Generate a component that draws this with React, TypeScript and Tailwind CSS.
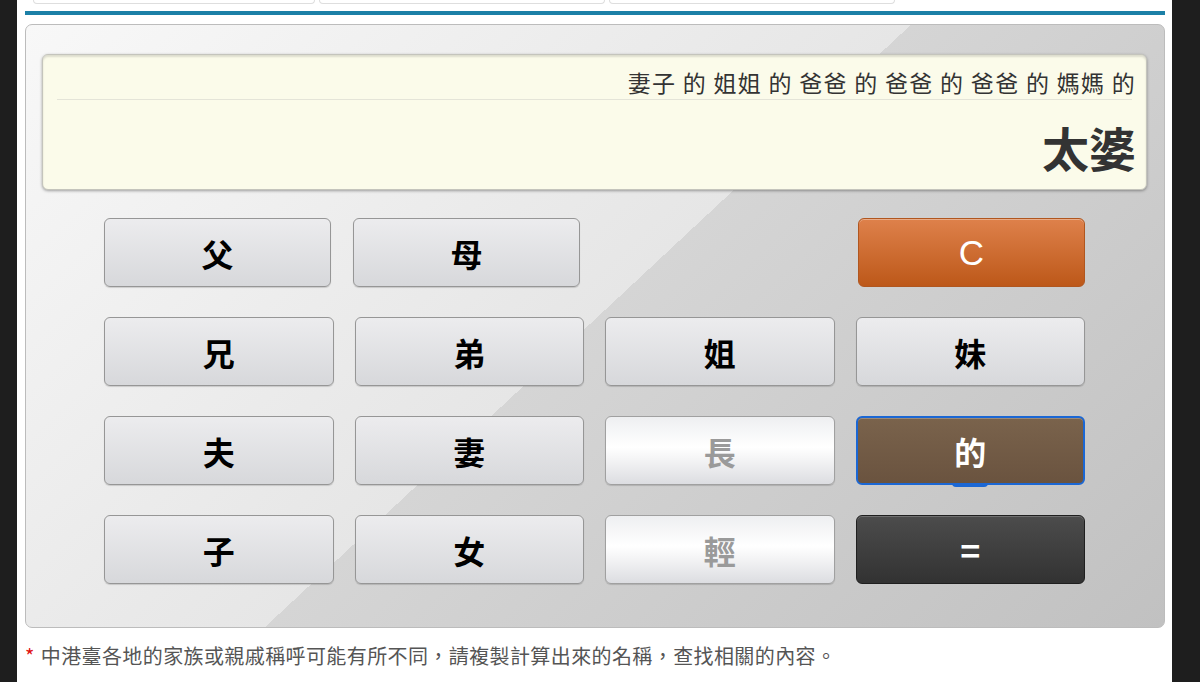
import React from 'react'

const CJK = { fontFamily: '"Noto Sans CJK TC", "Noto Sans", sans-serif' }

type Kind = 'normal' | 'light' | 'clear' | 'of' | 'equal'

const kindClass: Record<Kind, string> = {
  normal:
    'border border-[#969696] bg-[linear-gradient(#ececee,#d7d8db)] text-black font-bold text-[32px] shadow-[0_1px_1px_rgba(0,0,0,0.15)]',
  light:
    'border border-[#a0a0a0] bg-[linear-gradient(#eeeff1_0%,#ffffff_45%,#f6f6f7_60%,#dcdde1_100%)] text-[#9a9a9a] font-bold text-[32px] shadow-[0_1px_1px_rgba(0,0,0,0.15)]',
  clear:
    'border border-[#b0561f] bg-[linear-gradient(#de814b,#bd5819)] text-white text-[35px] shadow-[inset_0_1px_0_rgba(255,255,255,0.35)]',
  of: 'border-2 border-[#1b67d4] bg-[linear-gradient(#7a634c,#6a533f)] text-white font-bold text-[32px] shadow-[inset_0_1px_0_rgba(255,255,255,0.25)]',
  equal:
    'border border-[#1f1f1f] bg-[linear-gradient(#4c4c4c,#323232)] text-white font-bold text-[34px] shadow-[inset_0_1px_0_rgba(255,255,255,0.2)]',
}

function Key({ label, kind = 'normal', className = 'w-full' }: { label: string; kind?: Kind; className?: string }) {
  return (
    <button
      className={`relative h-[69px] rounded-[6px] flex items-center justify-center leading-none ${className} ${kindClass[kind]}`}
      style={kind === 'clear' ? { fontFamily: '"Liberation Sans", Arial, sans-serif' } : CJK}
    >
      {label}
      {kind === 'of' && (
        <span className="absolute left-1/2 -translate-x-1/2 -bottom-[4px] w-[36px] h-[4px] rounded-b-[4px] bg-[#1b67d4]" />
      )}
    </button>
  )
}

export default function App() {
  return (
    <div className="min-h-[682px] bg-[#1e1e1e] flex" style={CJK}>
      <div className="ml-[17px] w-[1155px] bg-white pl-2 pr-[7px]">
        {/* tabs, cut off at the top */}
        <div className="flex gap-[4px] pl-[8px] h-[4px]">
          <div className="w-[282px] h-[4px] border-x border-b border-[#dedede] rounded-b-[6px] bg-white" />
          <div className="w-[286px] h-[4px] border-x border-b border-[#dedede] rounded-b-[6px] bg-white" />
          <div className="w-[286px] h-[4px] border-x border-b border-[#dedede] rounded-b-[6px] bg-white" />
        </div>
        <div className="mt-[7px] h-[4px] bg-[#1c80a7]" />

        {/* calculator */}
        <div className="mt-[9px] h-[604px] rounded-[7px] border border-[#bcbcbc] bg-[linear-gradient(137deg,#f8f8f8_0%,#e6e6e6_49.6%,#d5d5d5_49.6%,#c1c1c1_100%)] pl-4 pr-[17px] pt-[29px]">
          <div className="h-[136px] rounded-[6px] bg-[#fbfbea] border border-[#c4c4bc] shadow-[0_1px_3px_rgba(0,0,0,0.35),inset_0_2px_2px_rgba(0,0,0,0.12)] px-[10px] pt-[10px]">
            <div className="h-[34px] flex items-center justify-end pr-[-2px] text-[23px] tracking-[1.3px] text-[#333] leading-none">
              妻子 的 姐姐 的 爸爸 的 爸爸 的 爸爸 的 媽媽 的
            </div>
            <div className="mx-1 h-px bg-[#e4e4d8]" />
            <div className="h-[88px] flex items-center justify-end pt-[4px] text-[47px] font-bold text-[#333] leading-none">
              太婆
            </div>
          </div>

          <div className="mx-[62px] mt-[28px] flex flex-col gap-[30px]">
            <div className="flex">
              <Key label="父" className="w-[227px]" />
              <Key label="母" className="w-[227px] ml-[22px]" />
              <Key label="C" kind="clear" className="w-[227px] ml-auto" />
            </div>
            <div className="grid grid-cols-4 gap-x-[21px] gap-y-[30px]">
              <Key label="兄" />
              <Key label="弟" />
              <Key label="姐" />
              <Key label="妹" />

              <Key label="夫" />
              <Key label="妻" />
              <Key label="長" kind="light" />
              <Key label="的" kind="of" />

              <Key label="子" />
              <Key label="女" />
              <Key label="輕" kind="light" />
              <Key label="=" kind="equal" />
            </div>
          </div>
        </div>

        <p className="mt-[18px] text-[20px] tracking-[0.4px] text-[#555] leading-none">
          <span className="text-[#e01010] mr-[6px]">*</span>
          中港臺各地的家族或親戚稱呼可能有所不同，請複製計算出來的名稱，查找相關的內容。
        </p>
      </div>
      <div className="flex-1" />
    </div>
  )
}
